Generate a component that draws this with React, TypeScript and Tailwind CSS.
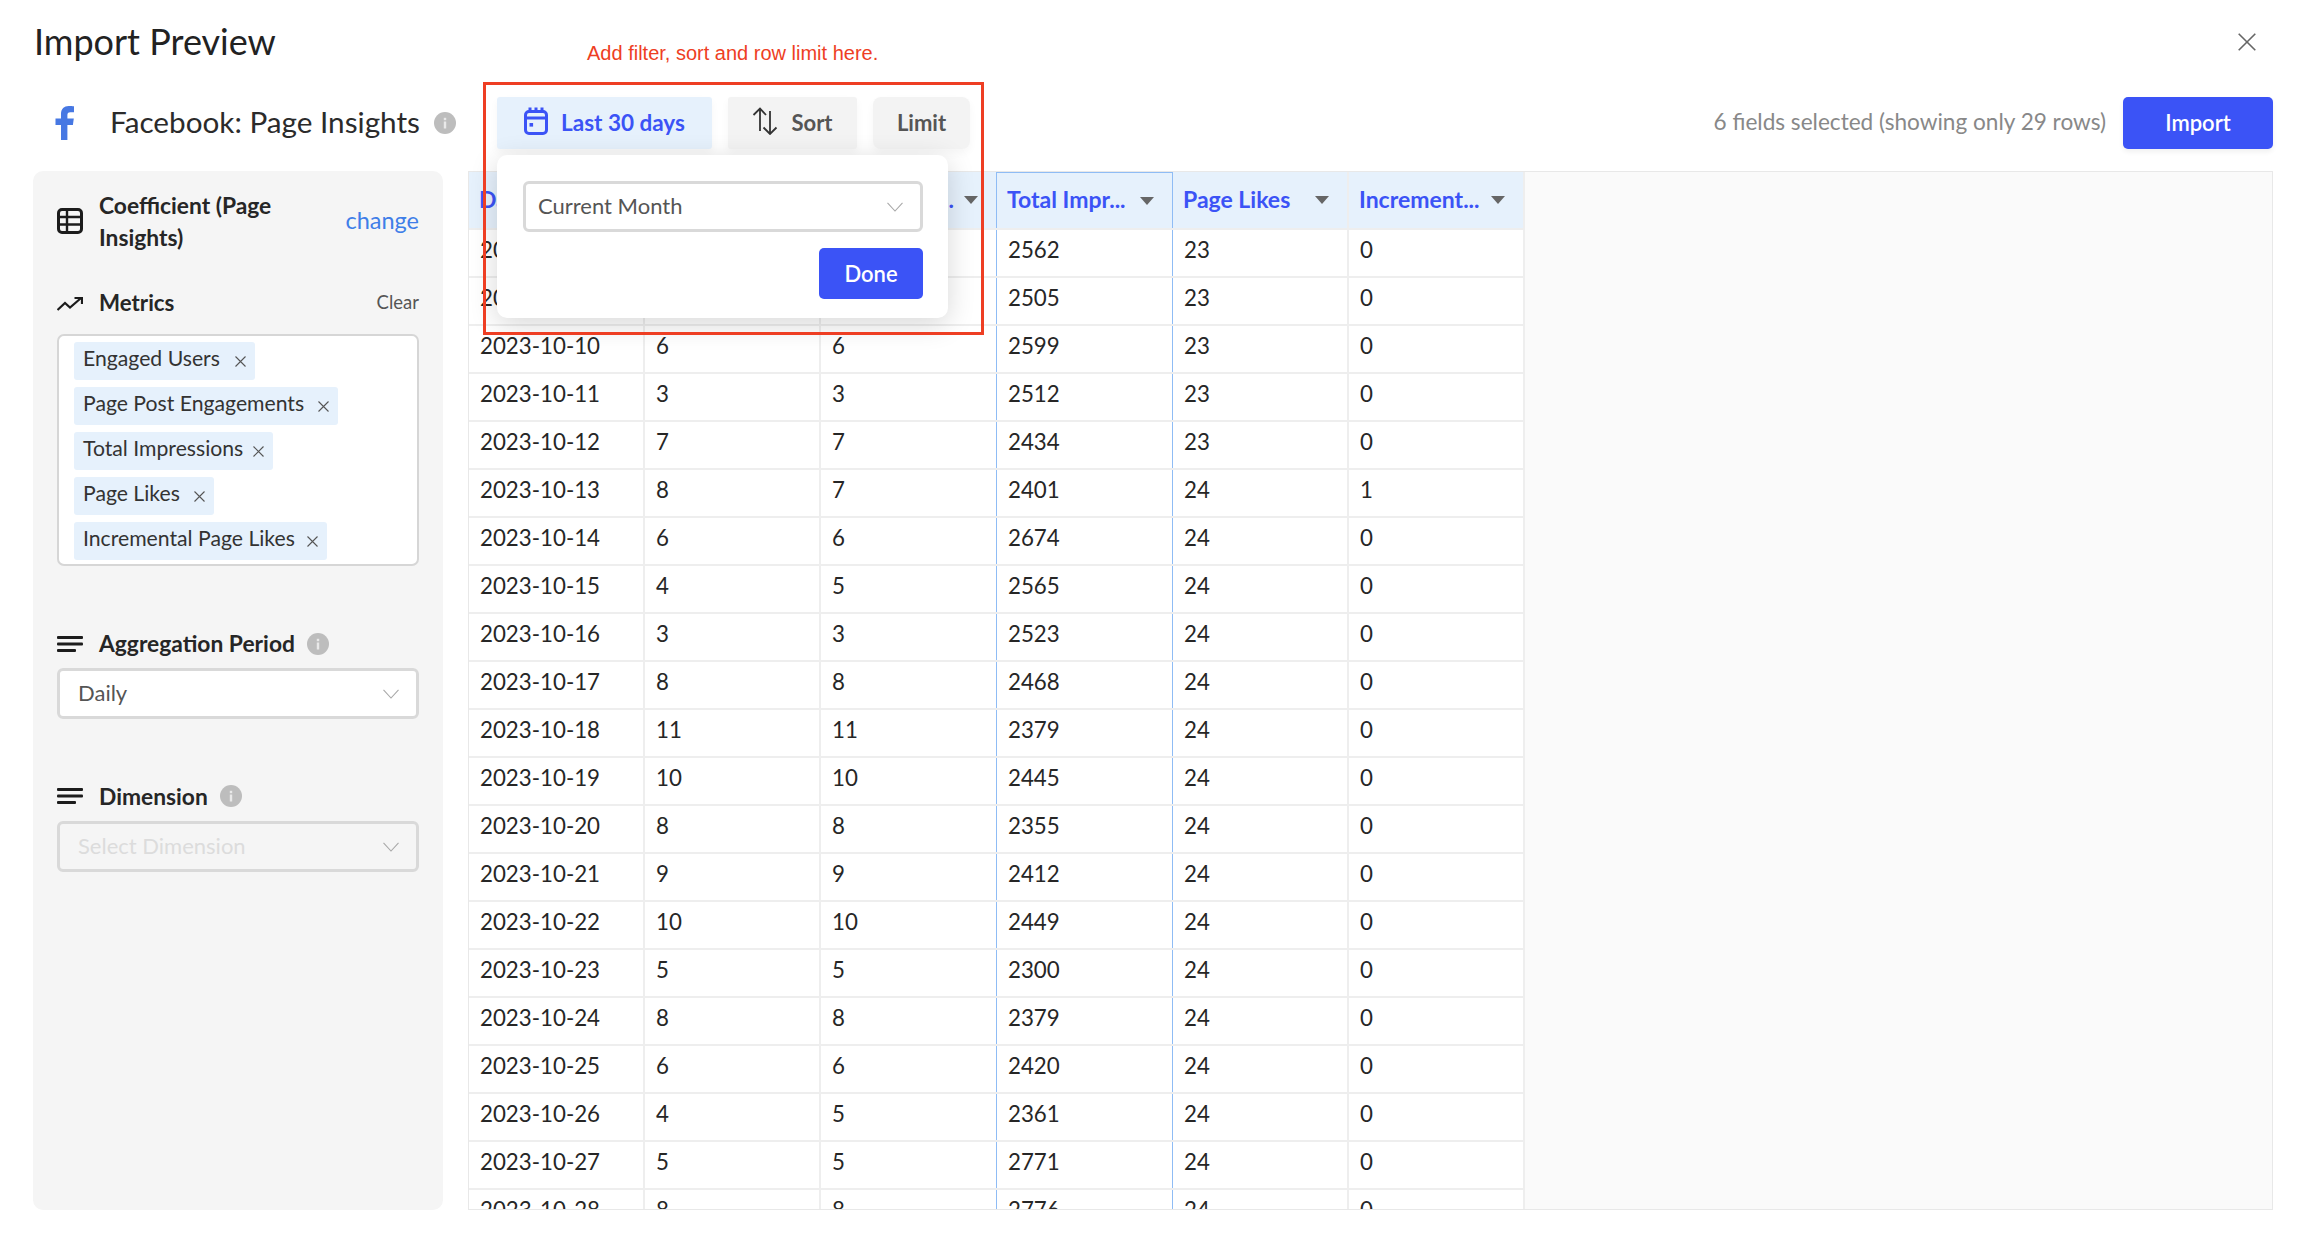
import React from "react";

const rows: (string | number)[][] = [
  ["2023-10-08", 7, 7, 2562, 23, 0],
  ["2023-10-09", 5, 5, 2505, 23, 0],
  ["2023-10-10", 6, 6, 2599, 23, 0],
  ["2023-10-11", 3, 3, 2512, 23, 0],
  ["2023-10-12", 7, 7, 2434, 23, 0],
  ["2023-10-13", 8, 7, 2401, 24, 1],
  ["2023-10-14", 6, 6, 2674, 24, 0],
  ["2023-10-15", 4, 5, 2565, 24, 0],
  ["2023-10-16", 3, 3, 2523, 24, 0],
  ["2023-10-17", 8, 8, 2468, 24, 0],
  ["2023-10-18", 11, 11, 2379, 24, 0],
  ["2023-10-19", 10, 10, 2445, 24, 0],
  ["2023-10-20", 8, 8, 2355, 24, 0],
  ["2023-10-21", 9, 9, 2412, 24, 0],
  ["2023-10-22", 10, 10, 2449, 24, 0],
  ["2023-10-23", 5, 5, 2300, 24, 0],
  ["2023-10-24", 8, 8, 2379, 24, 0],
  ["2023-10-25", 6, 6, 2420, 24, 0],
  ["2023-10-26", 4, 5, 2361, 24, 0],
  ["2023-10-27", 5, 5, 2771, 24, 0],
  ["2023-10-28", 8, 8, 2776, 24, 0],
];

const headers = ["Date", "Engaged U...", "Page Post ...", "Total Impr...", "Page Likes", "Increment..."];

const borderFor = (i: number) =>
  i === 2 || i === 3 ? "border-r border-r-[#8fbcf5]" : "border-r-2 border-r-[#eeeeee]";

function Info({ className = "" }: { className?: string }) {
  return (
    <svg viewBox="0 0 22 22" className={`w-[22px] h-[22px] shrink-0 ${className}`}>
      <circle cx="11" cy="11" r="11" fill="#bdbdbd" />
      <rect x="9.8" y="9.5" width="2.4" height="7" fill="#e9e9e9" />
      <rect x="9.8" y="5.8" width="2.4" height="2.4" fill="#e9e9e9" />
    </svg>
  );
}

function Lines() {
  return (
    <svg viewBox="0 0 26 16" className="w-[26px] h-[16px] shrink-0">
      <rect x="0" y="0" width="26" height="3" rx="1" fill="#1c1c1c" />
      <rect x="0" y="6.5" width="26" height="3" rx="1" fill="#1c1c1c" />
      <rect x="0" y="13" width="19" height="3" rx="1" fill="#1c1c1c" />
    </svg>
  );
}

function Chevron({ color = "#a8a8a8" }: { color?: string }) {
  return (
    <svg viewBox="0 0 16 10" className="w-[16px] h-[10px] shrink-0" fill="none" stroke={color} strokeWidth="1.1">
      <path d="M0.5 0.8 L8 9 L15.5 0.8" />
    </svg>
  );
}

function SelectBox({ label, textClass, pad = "pl-[11px]" }: { label: string; textClass: string; pad?: string }) {
  return (
    <div className={`w-full h-[51px] flex items-center justify-between border-[3px] border-[#d9d9d9] rounded-[6px] ${pad} pr-[17px]`}>
      <span className={`text-[22px] pb-[2px] ${textClass}`}>{label}</span>
      <Chevron />
    </div>
  );
}

function Tag({ label, w }: { label: string; w: string }) {
  return (
    <div className={`${w} h-[38px] flex items-center justify-between pl-[9px] pr-[9px] bg-[#e6f1fc] rounded-[3px]`}>
      <span className="text-[21.2px] pb-[4px] text-[#333333] whitespace-nowrap">{label}</span>
      <svg viewBox="0 0 11 11" className="w-[11px] h-[11px] mt-[1px] shrink-0" fill="none" stroke="#555555" strokeWidth="1.1">
        <path d="M0.5 0.5 L10.5 10.5 M10.5 0.5 L0.5 10.5" />
      </svg>
    </div>
  );
}

export default function App() {
  return (
    <div className="relative w-[2306px] h-[1240px] overflow-hidden bg-white font-['Lato','Liberation_Sans',sans-serif] text-[#222222]">
      {/* title row */}
      <div className="h-[84px] flex items-center justify-between pl-[34px] pr-[50px]">
        <h1 className="text-[36px] pb-[3px] font-normal text-[#222222]">Import Preview</h1>
        <svg viewBox="0 0 18 18" className="w-[18px] h-[18px]" fill="none" stroke="#666666" strokeWidth="1.6">
          <path d="M0.7 0.7 L17.3 17.3 M17.3 0.7 L0.7 17.3" />
        </svg>
      </div>

      {/* toolbar */}
      <div className="mt-[13px] h-[52px] flex items-center pl-[55px] w-[2273px]">
        <svg viewBox="0 0 20 34" className="w-[20px] h-[34px] shrink-0">
          <path d="M6 34 V19 H0.5 V12.6 H6 V8 C6 2.8 9.2 0 13.6 0 C15.8 0 17.7 0.2 19 0.3 V6.2 H15.4 C13 6.2 12.4 7.3 12.4 9 V12.6 H18.8 L17.9 19 H12.4 V34 Z" fill="#4778e3" />
        </svg>
        <span className="ml-[35px] w-[310px] pb-[2px] text-[29.7px] text-[#2b2b2b] whitespace-nowrap">Facebook: Page Insights</span>
        <Info className="ml-[14px]" />
        <div className="ml-[41px] flex gap-[16px]">
          <div className="w-[215px] h-[52px] flex items-center justify-center gap-[13px] bg-[#e6f1fc] rounded-[3px] text-[#3b53f6] font-bold text-[22.5px] shadow-[0_4px_8px_rgba(0,0,0,0.04)]">
            <svg viewBox="0 0 24 28" className="w-[24px] h-[28px] mb-[4px]" fill="none" stroke="#3b53f6" strokeWidth="3">
              <rect x="1.5" y="4.5" width="21" height="22" rx="3.5" />
              <path d="M1.5 11 H22.5 M6 0.5 V5.5 M12 0.5 V5.5 M18 0.5 V5.5" />
              <rect x="5.5" y="16" width="3.6" height="3.6" fill="#3b53f6" stroke="none" />
            </svg>
            <span className="pb-[1px]">Last 30 days</span>
          </div>
          <div className="w-[129px] h-[52px] flex items-center justify-center gap-[13px] bg-[#f3f3f3] rounded-[3px] text-[#555555] font-bold text-[22px] shadow-[0_4px_8px_rgba(0,0,0,0.04)]">
            <svg viewBox="0 0 26 28" className="w-[26px] h-[28px] mb-[5px]" fill="none" stroke="#333333" strokeWidth="1.8">
              <path d="M8 24 V1.5 M1.5 8 L8 1.5 L14 8 M18 4 V27 M11.5 20.5 L18 27 L24.5 20.5" />
            </svg>
            <span className="pb-[1px]">Sort</span>
          </div>
          <div className="w-[97px] h-[52px] flex items-center justify-center bg-[#f3f3f3] rounded-[8px] text-[#555555] font-bold text-[22px] pb-[2px] shadow-[0_4px_8px_rgba(0,0,0,0.04)]">
            Limit
          </div>
        </div>
        <span className="ml-auto pb-[2px] text-[22.6px] text-[#888888] whitespace-nowrap">6 fields selected (showing only 29 rows)</span>
        <button className="ml-[17px] w-[150px] h-[52px] pb-[2px] bg-[#3b53f6] rounded-[5px] text-white font-semibold text-[22px] shadow-[0_3px_5px_rgba(0,0,0,0.06)]">
          Import
        </button>
      </div>

      {/* main */}
      <div className="mt-[22px] ml-[33px] w-[2240px] h-[1039px] flex gap-[25px]">
        <aside className="w-[410px] shrink-0 bg-[#f5f5f5] rounded-[10px] px-[24px]">
          <div className="mt-[18px] flex items-center">
            <svg viewBox="0 0 26 26" className="w-[26px] h-[26px] shrink-0" fill="none" stroke="#1c1c1c" strokeWidth="3">
              <rect x="1.5" y="1.5" width="23" height="23" rx="3.5" />
              <path d="M1.5 9 H24.5 M1.5 16.5 H24.5 M10 1.5 V24.5" strokeWidth="2.4" />
            </svg>
            <div className="ml-[16px] w-[225px] text-[22.8px] leading-[32px] font-bold text-[#262626]">Coefficient (Page Insights)</div>
            <span className="ml-auto text-[23.5px] text-[#3f7ee8]">change</span>
          </div>
          <div className="mt-[33px] flex items-center h-[36px]">
            <svg viewBox="0 0 26 14" className="w-[26px] h-[14px] shrink-0" fill="none" stroke="#1c1c1c" strokeWidth="2.2">
              <path d="M0.5 13 L8 6 L13 10.5 L23.5 1.5 M17.5 1 H25 V7" />
            </svg>
            <span className="ml-[16px] pb-[2px] text-[22.3px] font-bold text-[#262626]">Metrics</span>
            <span className="ml-auto pb-[2px] text-[18.5px] text-[#555555]">Clear</span>
          </div>
          <div className="mt-[12px] h-[232px] bg-white border-2 border-[#d6d6d6] rounded-[7px] pl-[15px] pt-[6px] flex flex-col gap-[7px]">
            <Tag label="Engaged Users" w="w-[181px]" />
            <Tag label="Page Post Engagements" w="w-[264px]" />
            <Tag label="Total Impressions" w="w-[199px]" />
            <Tag label="Page Likes" w="w-[140px]" />
            <Tag label="Incremental Page Likes" w="w-[253px]" />
          </div>
          <div className="mt-[60px] flex items-center h-[36px]">
            <Lines />
            <span className="ml-[16px] pb-[2px] text-[22.8px] font-bold text-[#262626]">Aggregation Period</span>
            <Info className="ml-[12px]" />
          </div>
          <div className="mt-[6px]">
            <div className="bg-white rounded-[6px]">
              <SelectBox label="Daily" textClass="text-[#555555]" pad="pl-[18px]" />
            </div>
          </div>
          <div className="mt-[59px] flex items-center h-[36px]">
            <Lines />
            <span className="ml-[16px] text-[22.8px] font-bold text-[#262626]">Dimension</span>
            <Info className="ml-[12px]" />
          </div>
          <div className="mt-[7px]">
            <SelectBox label="Select Dimension" textClass="text-[#dcdcdc]" pad="pl-[18px]" />
          </div>
        </aside>

        <section className="flex-1 min-w-0 bg-[#fafafa] border border-[#e8e8e8] overflow-hidden">
          <div className="flex w-[1056px] h-[58px] bg-[#e6f1fc] border-b-2 border-b-[#eeeeee]">
            {headers.map((h, i) => (
              <div
                key={h}
                className={`w-[176px] shrink-0 flex items-center justify-between pl-[10px] pr-[18px] text-[23px] font-bold text-[#3b53f6] whitespace-nowrap ${borderFor(i)} ${i === 3 ? "border-t border-t-[#8fbcf5]" : ""}`}
              >
                <span className="pb-[2px]">{h}</span>
                <svg viewBox="0 0 14 8" className="w-[14px] h-[8px] shrink-0">
                  <path d="M0 0 H14 L7 8 Z" fill="#666666" />
                </svg>
              </div>
            ))}
          </div>
          {rows.map((r) => (
            <div key={r[0]} className="flex w-[1056px] h-[48px] bg-white border-b-2 border-b-[#eeeeee]">
              {r.map((c, i) => (
                <div
                  key={i}
                  className={`w-[176px] shrink-0 flex items-center pl-[11px] pb-[6px] text-[22.3px] text-[#262626] ${borderFor(i)}`}
                >
                  {c}
                </div>
              ))}
            </div>
          ))}
        </section>
      </div>

      {/* overlay annotation */}
      <div className="absolute left-[587px] top-[41px] text-[20px] leading-[24px] text-[#ee3e23] font-['Liberation_Sans',sans-serif] whitespace-nowrap">
        Add filter, sort and row limit here.
      </div>
      <div className="absolute left-[497px] top-[155px] w-[451px] h-[163px] bg-white rounded-[10px] shadow-[0_6px_28px_rgba(0,0,0,0.16)] pt-[26px] pl-[26px] pr-[25px]">
        <SelectBox label="Current Month" textClass="text-[#555555]" pad="pl-[12px]" />
        <div className="mt-[16px] flex justify-end">
          <button className="w-[104px] h-[51px] bg-[#3b53f6] rounded-[5px] text-white font-semibold text-[22px]">Done</button>
        </div>
      </div>
      <div className="absolute left-[483px] top-[82px] w-[501px] h-[253px] border-[3px] border-[#ee3e23] pointer-events-none" />
    </div>
  );
}
